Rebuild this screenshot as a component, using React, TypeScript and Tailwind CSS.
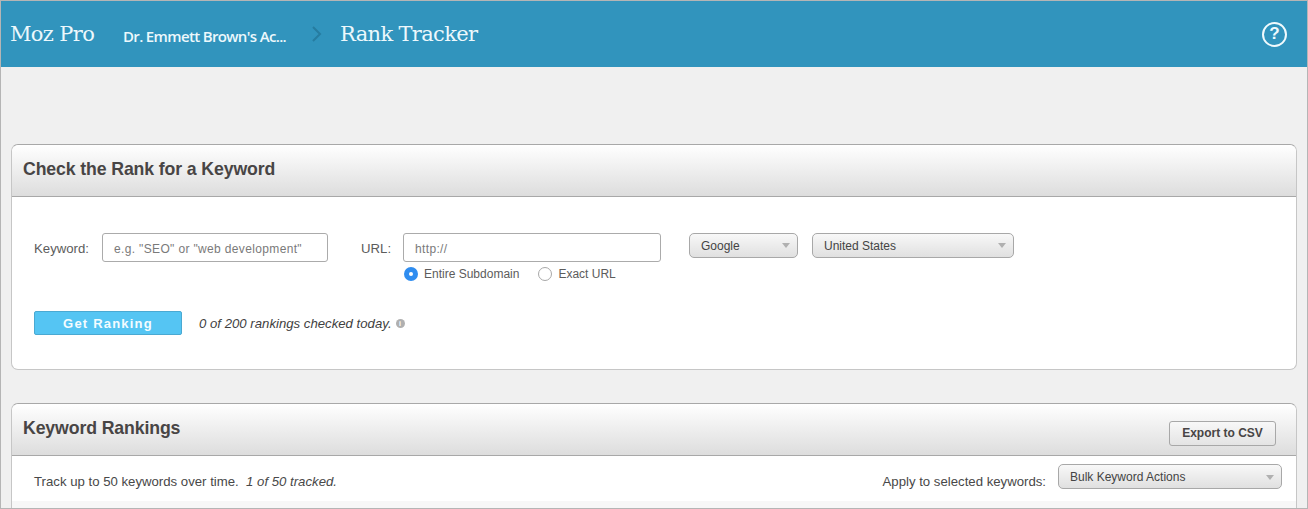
const SANS = "font-['Liberation_Sans',Arial,sans-serif]"

function Caret() {
  return <span className="w-0 h-0 border-x-[4px] border-x-transparent border-t-[5px] border-t-[#b0b0b0]" />
}

function SelectBox({ label, className }: { label: string; className: string }) {
  return (
    <div className={`h-[25px] flex items-center justify-between pl-[11px] pr-[7px] rounded-[5px] border border-[#a8a8a8] bg-gradient-to-b from-[#f8f8f8] to-[#e0e0e0] text-[12px] text-[#444] ${className}`}>
      <span>{label}</span>
      <Caret />
    </div>
  )
}

function PanelHeader({ title, children }: { title: string; children?: React.ReactNode }) {
  return (
    <div className="h-[52px] flex items-center justify-between pl-[11px] pr-[22px] rounded-t-[7px] border-b border-[#a8a8a8] bg-gradient-to-b from-[#ffffff] to-[#dddddd]">
      <h2 className="-mt-[2px] text-[17.7px] font-bold text-[#484545] tracking-[-0.12px]">{title}</h2>
      {children}
    </div>
  )
}

export default function App() {
  return (
    <div className={`h-[509px] overflow-hidden border border-[#b5b5b5] bg-[#f0f0f0] ${SANS}`}>
      <header className="h-[66px] flex items-center justify-between pl-[9px] pr-[20px] bg-[#3194bd] text-[#ecf8fc]">
        <div className="flex items-center">
          <span className="font-['DejaVu_Serif',serif] text-[21px] tracking-[-0.65px] w-[113px] mt-[2px]">Moz Pro</span>
          <span className="font-['Open_Sans',sans-serif] font-semibold text-[15px] tracking-[-0.65px] mt-[5px] w-[188px]">Dr. Emmett Brown's Ac...</span>
          <svg width="12" height="16" viewBox="0 0 12 16" fill="none" stroke="#267ca0" strokeWidth="2" className="mr-[17px]">
            <path d="M2 1l7 7-7 7" />
          </svg>
          <span className="font-['DejaVu_Serif',serif] text-[21px] tracking-[-0.65px] mt-[2px]">Rank Tracker</span>
        </div>
        <div className="w-[25px] h-[25px] flex items-center justify-center rounded-full border-2 border-[#f0fafd] text-[17px] font-bold text-[#f0fafd]">?</div>
      </header>

      <main className="px-[10px] pt-[77px]">
        <section className="h-[226px] rounded-[7px] border border-[#c6c6c6] border-t-[#a8a8a8] bg-white">
          <PanelHeader title="Check the Rank for a Keyword" />
          <div className="pl-[22px] pt-[36px]">
            <div className="flex items-start">
              <label className="w-[68px] h-[29px] pt-[2px] flex items-center text-[13.2px] text-[#5c5c5c]">Keyword:</label>
              <div className="w-[226px] h-[29px] pt-[2px] flex items-center pl-[11px] rounded-[3px] border border-[#ababab] text-[12px] tracking-[0.35px] text-[#7a7a7a]">e.g. "SEO" or "web development"</div>
              <label className="ml-[33px] w-[42px] h-[29px] pt-[2px] flex items-center text-[13.2px] text-[#5c5c5c]">URL:</label>
              <div>
                <div className="w-[258px] h-[29px] pt-[2px] flex items-center pl-[11px] rounded-[3px] border border-[#ababab] text-[12px] tracking-[0.35px] text-[#7a7a7a]">http://</div>
                <div className="flex items-center mt-[3px] text-[12px] text-[#5c5c5c]">
                  <span className="w-[14px] h-[14px] ml-[1px] mr-[6px] flex items-center justify-center rounded-full bg-[#2f8df0]">
                    <span className="w-[4px] h-[4px] rounded-full bg-white" />
                  </span>
                  <span>Entire Subdomain</span>
                  <span className="w-[14px] h-[14px] ml-[19px] mr-[6px] -mt-[1px] rounded-full border border-[#a8a8a8] bg-white" />
                  <span className="-mt-[1px]">Exact URL</span>
                </div>
              </div>
              <SelectBox label="Google" className="ml-[28px] w-[109px]" />
              <SelectBox label="United States" className="ml-[14px] w-[202px]" />
            </div>
            <div className="flex items-center mt-[28px]">
              <button className="w-[148px] h-[24px] pt-[1px] rounded-[2px] border border-[#4aa9d2] bg-[#55c5f3] text-[13px] font-bold tracking-[1.2px] text-[#f4fcff]">Get Ranking</button>
              <span className="ml-[17px] mt-[2px] text-[13.2px] italic text-[#3f3f3f]">0 of 200 rankings checked today.</span>
              <span className="ml-[4px] w-[9px] h-[9px] flex items-center justify-center rounded-full bg-[#b0b0b0] text-[7px] font-bold leading-none text-white">i</span>
            </div>
          </div>
        </section>

        <section className="mt-[33px] h-[110px] rounded-t-[7px] border border-[#c6c6c6] border-t-[#a8a8a8] bg-white">
          <PanelHeader title="Keyword Rankings">
            <button className="w-[107px] h-[25px] mt-[7px] -mr-[2px] rounded-[3px] border border-[#a8a8a8] bg-gradient-to-b from-[#f8f8f8] to-[#e4e4e4] text-[12px] font-bold text-[#484545]">Export to CSV</button>
          </PanelHeader>
          <div className="h-[45px] flex items-start justify-between pl-[22px] pr-[17px] pt-[8px] text-[13.2px] text-[#484848]">
            <p className="mt-[8px]">Track up to 50 keywords over time.&nbsp; <em>1 of 50 tracked.</em></p>
            <div className="flex items-start -mr-[3px]">
              <span className="mt-[8px] mr-[12px]">Apply to selected keywords:</span>
              <SelectBox label="Bulk Keyword Actions" className="w-[224px] pt-[1px]" />
            </div>
          </div>
          <div className="h-[8px] bg-[#f7f7f7]" />
        </section>
      </main>
    </div>
  )
}
